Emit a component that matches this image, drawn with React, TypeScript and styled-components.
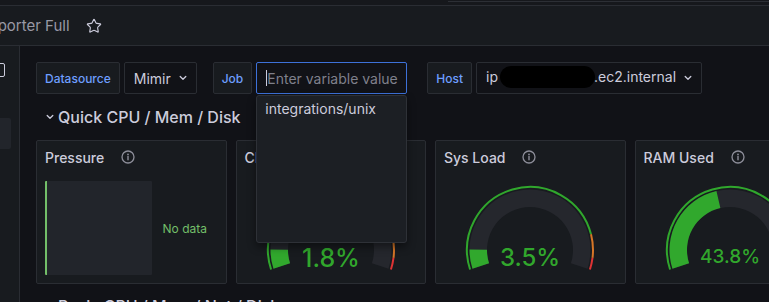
import React from 'react';
import styled, { createGlobalStyle } from 'styled-components';
import { Star } from 'lucide-react';

const GREEN = 'rgba(50, 172, 45, 0.97)';
const ORANGE = 'rgba(237, 129, 40, 0.89)';
const RED = 'rgba(245, 54, 54, 0.9)';

const GlobalStyle = createGlobalStyle`
  html, body {
    margin: 0;
    padding: 0;
    background: #111217;
  }
  body {
    font-family: Inter, "Noto Sans", sans-serif;
    color: #ccccdc;
    overflow: hidden;
  }
  * {
    box-sizing: border-box;
  }
`;

const Page = styled.div`
  width: 769px;
  height: 302px;
  overflow: hidden;
  display: flex;
  flex-direction: column;
  background: #111217;
`;

const TopStrip = styled.div`
  height: 5px;
  flex-shrink: 0;
  display: flex;
  justify-content: flex-end;
  background: #16181c;
`;

const SearchEdge = styled.div`
  width: 321px;
  height: 2px;
  border-bottom: 1px solid #2c2f35;
`;

const Header = styled.header`
  height: 41px;
  flex-shrink: 0;
  display: flex;
  align-items: center;
  gap: 16px;
  background: #181b1f;
  border-top: 1px solid #2a2d33;
  border-bottom: 1px solid #2a2d33;
  overflow: hidden;
`;

const Crumb = styled.span`
  margin-left: -62px;
  font-size: 15px;
  color: rgba(204, 204, 220, 0.72);
  white-space: nowrap;
`;

const Body = styled.div`
  display: flex;
  flex: 1;
  min-height: 0;
`;

const Sidebar = styled.nav`
  width: 20px;
  flex-shrink: 0;
  background: #181b1f;
  border-right: 1px solid #2a2d33;
  padding-top: 17px;
  display: flex;
  flex-direction: column;
  gap: 41px;
  overflow: hidden;
`;

const DockIcon = styled.span`
  display: block;
  width: 14px;
  height: 14px;
  margin-left: -9px;
  border: 1.5px solid #ccccdc;
  border-radius: 2px;
`;

const NavActive = styled.span`
  display: block;
  width: 11px;
  height: 31px;
  background: #22252b;
  border-radius: 0 2px 2px 0;
`;

const Main = styled.main`
  flex: 1;
  min-width: 0;
  padding: 16px 0 0 16px;
  overflow: hidden;
`;

const VarsRow = styled.div`
  display: flex;
  gap: 16px;
  height: 32px;
`;

const VarGroup = styled.div<{ $extra?: number }>`
  display: flex;
  gap: 4px;
  margin-left: ${(p) => p.$extra || 0}px;
`;

const VarLabel = styled.label`
  display: flex;
  align-items: center;
  height: 32px;
  padding: 0 8px;
  background: #181b1f;
  border: 1px solid #2a2d33;
  border-radius: 2px;
  color: #6e9fff;
  font-size: 12px;
  font-weight: 500;
`;

const Select = styled.div`
  display: flex;
  align-items: center;
  gap: 8px;
  height: 32px;
  padding: 0 9px 0 9px;
  border: 1px solid #2a2d33;
  border-radius: 2px;
  font-size: 14px;
  color: #ccccdc;
  white-space: nowrap;
`;

const Redacted = styled.span`
  display: inline-block;
  vertical-align: middle;
  width: 95px;
  height: 22px;
  margin: -3px -1px 0 2px;
  background: #000;
  border-radius: 12px;
`;

const InputWrap = styled.div`
  position: relative;
`;

const FakeInput = styled.div`
  width: 151px;
  height: 32px;
  display: flex;
  align-items: center;
  padding-left: 9px;
  border: 1px solid #3d71d9;
  border-radius: 2px;
  font-size: 14px;
  color: rgba(204, 204, 220, 0.6);
  white-space: nowrap;
`;

const Caret = styled.span`
  width: 1px;
  height: 16px;
  background: #ccccdc;
`;

const Menu = styled.div`
  position: absolute;
  z-index: 10;
  top: calc(100% + 1px);
  left: 0;
  width: 151px;
  height: 148px;
  background: #1c1f24;
  border: 1px solid #2e3137;
  border-radius: 3px;
  box-shadow: 0 4px 8px rgba(0, 0, 0, 0.45);
`;

const MenuItem = styled.div`
  height: 26px;
  line-height: 26px;
  padding: 0 8px;
  font-size: 14px;
  color: #ccccdc;
`;

const RowHeader = styled.div`
  height: 30px;
  margin: 8px 0;
  padding-left: 10px;
  display: flex;
  align-items: center;
  gap: 4px;
  font-size: 16px;
  font-weight: 500;
  color: #ccccdc;
  white-space: nowrap;
`;

const PanelGrid = styled.div`
  display: grid;
  grid-template-columns: repeat(4, 190.5px);
  gap: 9px;
  height: 143px;
`;

const Panel = styled.section`
  display: flex;
  flex-direction: column;
  background: #181b1f;
  border: 1px solid #2a2d33;
  border-radius: 2px;
  min-width: 0;
`;

const PanelHeader = styled.div`
  height: 32px;
  flex-shrink: 0;
  padding: 0 8px;
  display: flex;
  align-items: center;
  gap: 17px;
  font-size: 14px;
  font-weight: 500;
  color: #ccccdc;
  white-space: nowrap;
`;

const PanelBody = styled.div<{ $center?: boolean }>`
  flex: 1;
  min-height: 0;
  padding: 8px;
  display: flex;
  align-items: center;
  justify-content: ${(p) => (p.$center ? 'center' : 'flex-start')};
`;

const StatBox = styled.div`
  width: 107px;
  height: 100%;
  background: #22252b;
  border-left: 2.5px solid #73bf69;
  border-radius: 1px;
`;

const NoData = styled.span`
  flex: 1;
  text-align: center;
  font-size: 12px;
  color: #73bf69;
`;

const Chevron = () => (
  <svg width="8" height="6" viewBox="0 0 8 6" fill="none">
    <polyline points="1.2,1.5 4,4.3 6.8,1.5" stroke="#ccccdc" strokeWidth="1.3" strokeLinecap="round" strokeLinejoin="round" />
  </svg>
);

const InfoIcon = () => (
  <svg width="14" height="14" viewBox="0 0 14 14" fill="none">
    <circle cx="7" cy="7" r="6" stroke="rgba(204,204,220,0.65)" strokeWidth="1.3" />
    <circle cx="7" cy="4.4" r="0.9" fill="rgba(204,204,220,0.65)" />
    <line x1="7" y1="6.5" x2="7" y2="9.8" stroke="rgba(204,204,220,0.65)" strokeWidth="1.4" strokeLinecap="round" />
  </svg>
);

const CX = 70;
const CY = 69;

const pt = (r: number, t: number) => {
  const a = ((198 - 216 * t) * Math.PI) / 180;
  return [CX + r * Math.cos(a), CY - r * Math.sin(a)];
};

const arc = (r: number, t0: number, t1: number) => {
  const [x0, y0] = pt(r, t0);
  const [x1, y1] = pt(r, t1);
  const large = (t1 - t0) * 216 > 180 ? 1 : 0;
  return `M${x0} ${y0} A${r} ${r} 0 ${large} 1 ${x1} ${y1}`;
};

const band = (ro: number, ri: number, t0: number, t1: number) => {
  const [a0, b0] = pt(ro, t0);
  const [a1, b1] = pt(ro, t1);
  const [c1, d1] = pt(ri, t1);
  const [c0, d0] = pt(ri, t0);
  const large = (t1 - t0) * 216 > 180 ? 1 : 0;
  return `M${a0} ${b0} A${ro} ${ro} 0 ${large} 1 ${a1} ${b1} L${c1} ${d1} A${ri} ${ri} 0 ${large} 0 ${c0} ${d0} Z`;
};

interface GaugeProps {
  fill: number;
  text: string;
  size: number;
  baseline: number;
}

const Gauge: React.FC<GaugeProps> = ({ fill, text, size, baseline }) => (
  <svg width="140" height="94" viewBox="0 0 140 94">
    <path d={arc(63, 0, 0.85)} stroke={GREEN} strokeWidth="2" fill="none" />
    <path d={arc(63, 0.85, 0.95)} stroke={ORANGE} strokeWidth="2" fill="none" />
    <path d={arc(63, 0.95, 1)} stroke={RED} strokeWidth="2" fill="none" />
    <path d={band(60.5, 43, 0, 1)} fill="#25272d" />
    <path d={band(60.5, 43, 0, fill)} fill={GREEN} />
    <text x={CX} y={baseline} textAnchor="middle" fontSize={size} fontWeight={500} fill={GREEN} fontFamily="Inter, sans-serif">
      {text}
    </text>
  </svg>
);

const gauges = [
  { title: 'CPU Busy', fill: 0.085, text: '1.8%', size: 25, baseline: 85.5 },
  { title: 'Sys Load', fill: 0.085, text: '3.5%', size: 24, baseline: 84.5 },
  { title: 'RAM Used', fill: 0.44, text: '43.8%', size: 19, baseline: 81.5 },
];

const App: React.FC = () => (
  <Page>
    <GlobalStyle />
    <TopStrip>
      <SearchEdge />
    </TopStrip>
    <Header>
      <Crumb>Node Exporter Full</Crumb>
      <Star size={16} strokeWidth={1.7} color="#ccccdc" />
    </Header>
    <Body>
      <Sidebar>
        <DockIcon />
        <NavActive />
      </Sidebar>
      <Main>
        <VarsRow>
          <VarGroup>
            <VarLabel>Datasource</VarLabel>
            <Select>
              Mimir
              <Chevron />
            </Select>
          </VarGroup>
          <VarGroup>
            <VarLabel>Job</VarLabel>
            <InputWrap>
              <FakeInput>
                <Caret />
                Enter variable value
              </FakeInput>
              <Menu>
                <MenuItem>integrations/unix</MenuItem>
              </Menu>
            </InputWrap>
          </VarGroup>
          <VarGroup $extra={4}>
            <VarLabel>Host</VarLabel>
            <Select>
              <span>
                ip<Redacted />.ec2.internal
              </span>
              <Chevron />
            </Select>
          </VarGroup>
        </VarsRow>

        <RowHeader>
          <Chevron />
          Quick CPU / Mem / Disk
        </RowHeader>

        <PanelGrid>
          <Panel>
            <PanelHeader>
              Pressure
              <InfoIcon />
            </PanelHeader>
            <PanelBody>
              <StatBox />
              <NoData>No data</NoData>
            </PanelBody>
          </Panel>
          {gauges.map((g) => (
            <Panel key={g.title}>
              <PanelHeader>
                {g.title}
                <InfoIcon />
              </PanelHeader>
              <PanelBody $center>
                <Gauge fill={g.fill} text={g.text} size={g.size} baseline={g.baseline} />
              </PanelBody>
            </Panel>
          ))}
        </PanelGrid>

        <RowHeader>
          <Chevron />
          Basic CPU / Mem / Net / Disk
        </RowHeader>
      </Main>
    </Body>
  </Page>
);

export default App;
